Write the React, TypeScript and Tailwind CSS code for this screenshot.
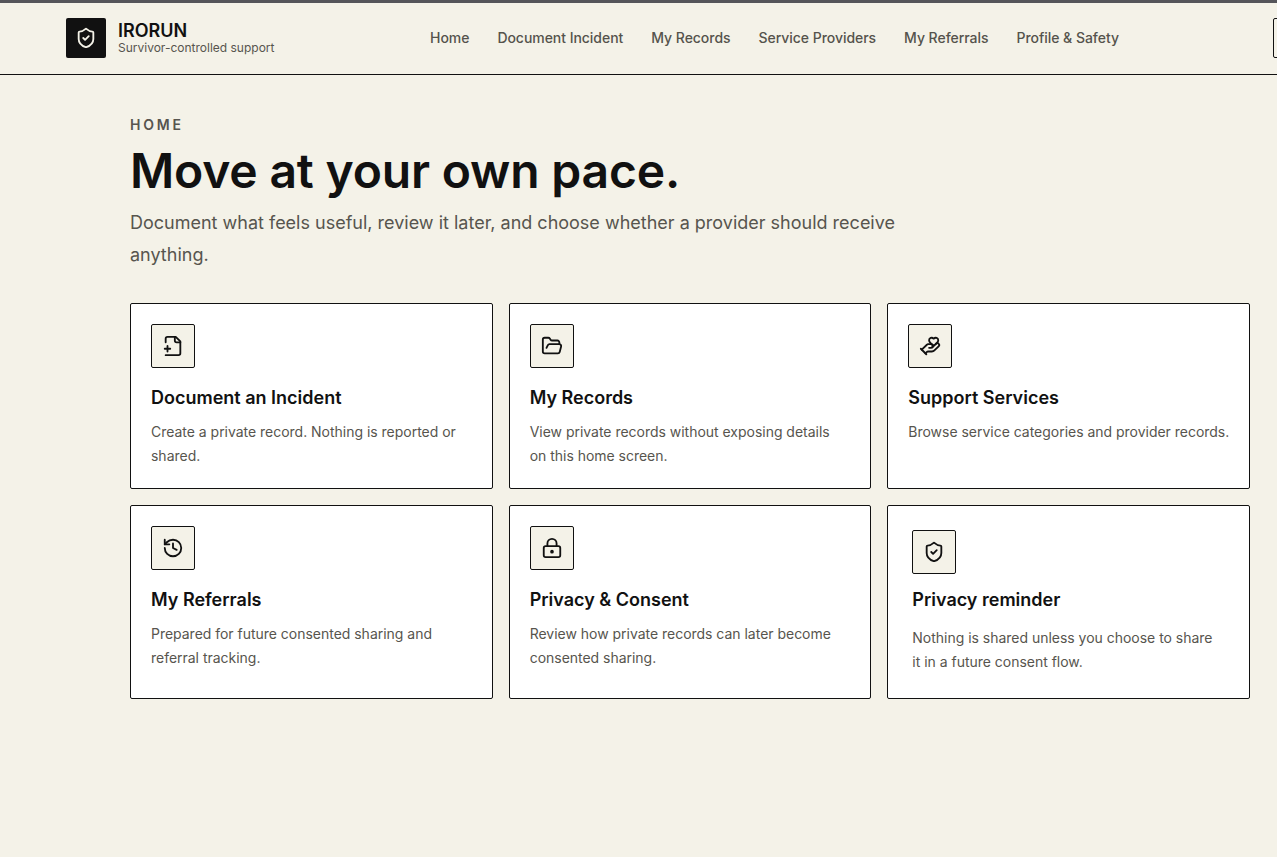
import type { ReactNode } from "react";
import { FolderOpen, HandHeart, History, LockKeyhole, ShieldCheck } from "lucide-react";

const nav = ["Home", "Document Incident", "My Records", "Service Providers", "My Referrals", "Profile & Safety"];

function FilePlusLeft({ size, color, strokeWidth }: { size: number; color: string; strokeWidth: number }) {
  return (
    <svg width={size} height={size} viewBox="0 0 24 24" fill="none" stroke={color} strokeWidth={strokeWidth} strokeLinecap="round" strokeLinejoin="round">
      <path d="M4 22h14a2 2 0 0 0 2-2V7l-5-5H6a2 2 0 0 0-2 2v4" />
      <path d="M14 2v4a2 2 0 0 0 2 2h4" />
      <path d="M3 15h6" />
      <path d="M6 12v6" />
    </svg>
  );
}

function Card({ Icon, title, children, reminder }: { Icon: any; title: string; children: ReactNode; reminder?: boolean }) {
  return (
    <div className={`border border-[#111111] rounded-[2px] bg-white ${reminder ? "p-6" : "p-5"}`}>
      <div className="w-11 h-11 flex items-center justify-center border border-[#111111] rounded-[2px] bg-[#f4f2e8]">
        <Icon size={22} strokeWidth={2} color="#111111" />
      </div>
      <h2 className={`${reminder ? "mt-[14px]" : "mt-[18px]"} text-[18px] leading-[24px] font-semibold text-[#111111]`}>{title}</h2>
      <p className={`${reminder ? "mt-[14px]" : "mt-[10px]"} -mr-2 text-[14px] leading-[24px] tracking-[-0.02px] text-[#57554e]`}>{children}</p>
    </div>
  );
}

export default function App() {
  return (
    <div className="min-h-[857px] bg-[#f4f2e8] overflow-hidden font-['Inter',sans-serif]">
      <div className="h-[3px] bg-[#55555a]" />
      <header className="h-[72px] pb-[2px] border-b border-[#111111] flex items-center pl-[66px] relative">
        <div className="flex items-center gap-3 w-[364px] shrink-0">
          <div className="w-10 h-10 rounded-[2px] bg-[#111111] flex items-center justify-center">
            <ShieldCheck size={22} color="#f4f2e8" strokeWidth={2} />
          </div>
          <div>
            <div className="text-[18px] leading-[22px] font-semibold text-[#111111]">IRORUN</div>
            <div className="-mt-px text-[12px] leading-[14px] text-[#57554e]">Survivor-controlled support</div>
          </div>
        </div>
        <nav className="flex gap-7 text-[14px] leading-5 font-medium tracking-[-0.04px] text-[#55534c] whitespace-nowrap">
          {nav.map((n) => (
            <span key={n}>{n}</span>
          ))}
        </nav>
        <div className="absolute left-[1273px] top-[15px] w-24 h-10 border border-[#111111] rounded-[2px]" />
      </header>
      <main className="pl-[130px] pr-[27px] pt-[40px]">
        <div className="text-[14px] leading-5 font-semibold tracking-[0.2em] text-[#57554e]">HOME</div>
        <h1 className="mt-[10px] text-[48px] leading-[52px] font-semibold text-[#111111] tracking-[-0.18px]">Move at your own pace.</h1>
        <p className="mt-[10px] max-w-[780px] text-[18px] leading-[32px] text-[#57554e]">
          Document what feels useful, review it later, and choose whether a provider should receive anything.
        </p>
        <div className="mt-[32px] grid grid-cols-3 gap-4 w-[1120px]">
          <Card Icon={FilePlusLeft} title="Document an Incident">Create a private record. Nothing is reported or shared.</Card>
          <Card Icon={FolderOpen} title="My Records">View private records without exposing details<br />on this home screen.</Card>
          <Card Icon={HandHeart} title="Support Services">Browse service categories and provider records.</Card>
          <Card Icon={History} title="My Referrals">Prepared for future consented sharing and referral tracking.</Card>
          <Card Icon={LockKeyhole} title="Privacy & Consent">Review how private records can later become consented sharing.</Card>
          <Card reminder Icon={ShieldCheck} title="Privacy reminder">Nothing is shared unless you choose to share<br />it in a future consent flow.</Card>
        </div>
      </main>
    </div>
  );
}
